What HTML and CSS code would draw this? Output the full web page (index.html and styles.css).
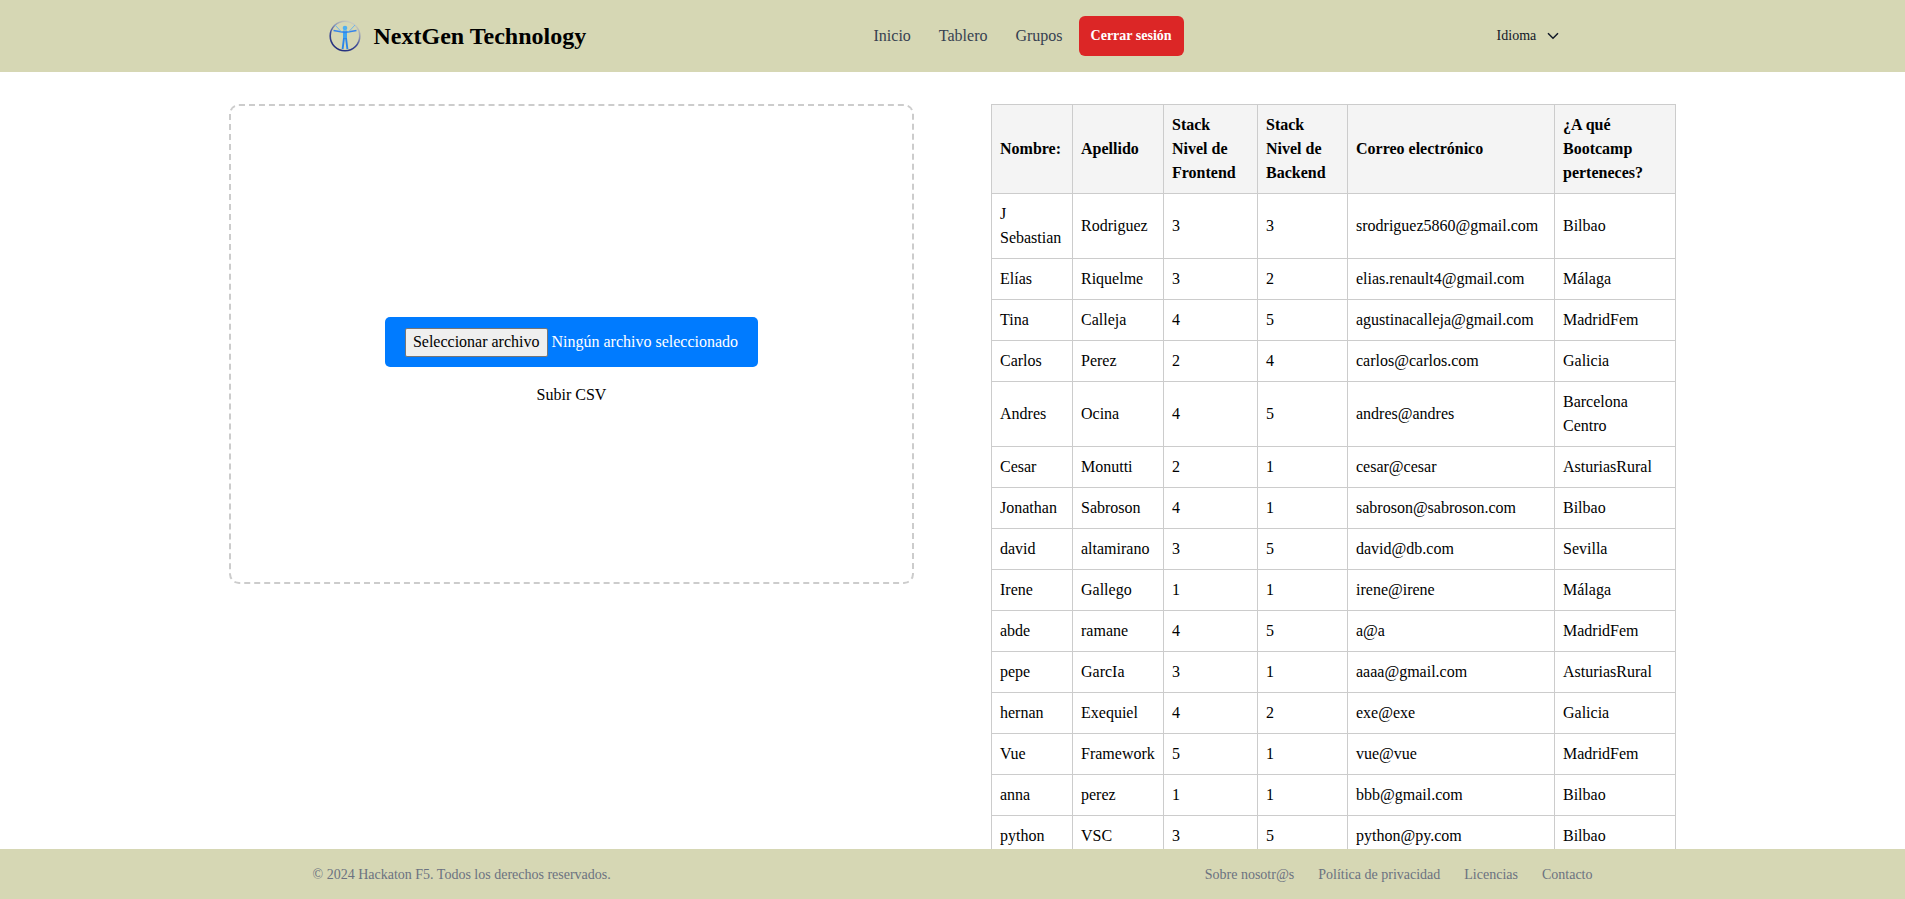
FILE: index.html
```html
<!DOCTYPE html>
<html lang="es">
<head>
    <meta charset="UTF-8">
    <meta name="viewport" content="width=device-width, initial-scale=1.0">
    <title>NextGen Technology</title>
    <link rel="stylesheet" href="styles.css">
</head>
<body>
    <header class="site-header">
        <div class="header-inner">
            <a class="brand" href="#">
                <svg class="brand-logo" width="32" height="32" viewBox="0 0 32 32" fill="none">
                    <defs>
                        <linearGradient id="ring" x1="0.75" y1="0" x2="0.25" y2="1">
                            <stop offset="0" stop-color="#d3d5c0"/>
                            <stop offset="0.3" stop-color="#9aa0b4"/>
                            <stop offset="0.6" stop-color="#3d4a96"/>
                            <stop offset="1" stop-color="#1f2a78"/>
                        </linearGradient>
                    </defs>
                    <circle cx="16" cy="16" r="14.8" stroke="url(#ring)" stroke-width="1.6"/>
                    <circle cx="16" cy="8" r="2.3" fill="#4fb0f0"/>
                    <path d="M16 10.5v8.5" stroke="#3fa4f0" stroke-width="4"/>
                    <path d="M15 18l-1.4 11M17 18l1.4 11" stroke="#2b86ea" stroke-width="1.9"/>
                    <path d="M4.5 10.5L16 12.5L27.5 10.5" stroke="#3584ea" stroke-width="1.4"/>
                    <path d="M6 5l7 7.5M26 5l-7 7.5" stroke="#6fb6ec" stroke-width="1"/>
                </svg>
                <span class="brand-name">NextGen Technology</span>
            </a>
            <nav class="main-nav">
                <a href="#">Inicio</a>
                <a href="#">Tablero</a>
                <a href="#">Grupos</a>
                <button class="logout" type="button">Cerrar sesión</button>
            </nav>
            <button class="lang" type="button">
                Idioma
                <svg width="12" height="8" viewBox="0 0 12 8" fill="none" stroke="#111827" stroke-width="1.5">
                    <path d="M1 1.2l5 5 5-5"/>
                </svg>
            </button>
        </div>
    </header>

    <main class="content">
        <section class="upload">
            <div class="file-field">
                <button class="file-button" type="button">Seleccionar archivo</button>
                <span>Ningún archivo seleccionado</span>
            </div>
            <button class="upload-button" type="button">Subir CSV</button>
        </section>

        <table class="people">
            <thead>
                <tr>
                    <th class="col-name">Nombre:</th>
                    <th class="col-surname">Apellido</th>
                    <th class="col-front">Stack Nivel de Frontend</th>
                    <th class="col-back">Stack Nivel de Backend</th>
                    <th class="col-mail">Correo electrónico</th>
                    <th class="col-camp">¿A qué Bootcamp perteneces?</th>
                </tr>
            </thead>
            <tbody>
                <tr><td>J Sebastian</td><td>Rodriguez</td><td>3</td><td>3</td><td>srodriguez5860@gmail.com</td><td>Bilbao</td></tr>
                <tr><td>Elías</td><td>Riquelme</td><td>3</td><td>2</td><td>elias.renault4@gmail.com</td><td>Málaga</td></tr>
                <tr><td>Tina</td><td>Calleja</td><td>4</td><td>5</td><td>agustinacalleja@gmail.com</td><td>MadridFem</td></tr>
                <tr><td>Carlos</td><td>Perez</td><td>2</td><td>4</td><td>carlos@carlos.com</td><td>Galicia</td></tr>
                <tr><td>Andres</td><td>Ocina</td><td>4</td><td>5</td><td>andres@andres</td><td>Barcelona Centro</td></tr>
                <tr><td>Cesar</td><td>Monutti</td><td>2</td><td>1</td><td>cesar@cesar</td><td>AsturiasRural</td></tr>
                <tr><td>Jonathan</td><td>Sabroson</td><td>4</td><td>1</td><td>sabroson@sabroson.com</td><td>Bilbao</td></tr>
                <tr><td>david</td><td>altamirano</td><td>3</td><td>5</td><td>david@db.com</td><td>Sevilla</td></tr>
                <tr><td>Irene</td><td>Gallego</td><td>1</td><td>1</td><td>irene@irene</td><td>Málaga</td></tr>
                <tr><td>abde</td><td>ramane</td><td>4</td><td>5</td><td>a@a</td><td>MadridFem</td></tr>
                <tr><td>pepe</td><td>GarcIa</td><td>3</td><td>1</td><td>aaaa@gmail.com</td><td>AsturiasRural</td></tr>
                <tr><td>hernan</td><td>Exequiel</td><td>4</td><td>2</td><td>exe@exe</td><td>Galicia</td></tr>
                <tr><td>Vue</td><td>Framework</td><td>5</td><td>1</td><td>vue@vue</td><td>MadridFem</td></tr>
                <tr><td>anna</td><td>perez</td><td>1</td><td>1</td><td>bbb@gmail.com</td><td>Bilbao</td></tr>
                <tr><td>python</td><td>VSC</td><td>3</td><td>5</td><td>python@py.com</td><td>Bilbao</td></tr>
            </tbody>
        </table>
    </main>

    <footer class="site-footer">
        <div class="footer-inner">
            <span>© 2024 Hackaton F5. Todos los derechos reservados.</span>
            <nav class="footer-nav">
                <a href="#">Sobre nosotr@s</a>
                <a href="#">Política de privacidad</a>
                <a href="#">Licencias</a>
                <a href="#">Contacto</a>
            </nav>
        </div>
    </footer>
</body>
</html>
```

FILE: styles.css
```css
:root {
    --band: #d6d7b4;
    --border: #cccccc;
    --nav-text: #374151;
    --footer-text: #6b7280;
    --blue: #007bff;
    --red: #dc2626;
    --font: "Liberation Serif", "Times New Roman", serif;
}

* {
    box-sizing: border-box;
    margin: 0;
    padding: 0;
}

body {
    height: 100vh;
    display: flex;
    flex-direction: column;
    overflow: hidden;
    background: #fff;
    color: #000;
    font-family: var(--font);
    font-size: 16px;
    line-height: 24px;
}

a {
    color: inherit;
    text-decoration: none;
}

button {
    font-family: var(--font);
}

.site-header {
    flex: none;
    height: 72px;
    background: var(--band);
}

.header-inner {
    max-width: 1280px;
    height: 100%;
    margin: 0 auto;
    padding: 0 16px;
    display: flex;
    align-items: center;
}

.brand {
    width: 533px;
    display: flex;
    align-items: center;
    gap: 13px;
}

.brand-name {
    font-size: 24px;
    font-weight: 700;
    line-height: 32px;
}

.main-nav {
    display: flex;
    align-items: center;
    gap: 4px;
}

.main-nav a {
    padding: 0 12px;
    color: var(--nav-text);
}

.logout {
    height: 40px;
    padding: 0 12px;
    border: none;
    border-radius: 6px;
    background: var(--red);
    color: #fff;
    font-size: 14px;
    font-weight: 700;
}

.lang {
    margin-left: 313px;
    display: flex;
    align-items: center;
    gap: 11px;
    border: none;
    background: transparent;
    color: #111827;
    font-size: 14px;
}

.content {
    flex: 1;
    min-height: 0;
    overflow: hidden;
    padding-top: 32px;
    display: flex;
    justify-content: center;
    align-items: flex-start;
    gap: 77px;
}

.upload {
    width: 685px;
    height: 480px;
    padding-top: 36px;
    display: flex;
    flex-direction: column;
    align-items: center;
    justify-content: center;
    gap: 16px;
    border: 2px dashed var(--border);
    border-radius: 10px;
}

.file-field {
    display: flex;
    align-items: center;
    gap: 4px;
    height: 50px;
    padding: 0 20px;
    border-radius: 5px;
    background: var(--blue);
    color: #fff;
}

.file-button {
    height: 29px;
    padding: 0 7px;
    border: 1px solid #767676;
    border-radius: 2px;
    background: #efefef;
    color: #000;
    font-size: 16px;
}

.upload-button {
    border: none;
    background: transparent;
    color: #000;
    font-size: 16px;
    line-height: 24px;
}

.people {
    width: 685px;
    flex: none;
    table-layout: fixed;
    border-collapse: collapse;
}

.people th,
.people td {
    padding: 8px;
    border: 1px solid var(--border);
    text-align: left;
}

.people th {
    background: #f4f4f4;
    font-weight: 700;
}

.col-name { width: 81px; }
.col-surname { width: 91px; }
.col-front { width: 94px; }
.col-back { width: 90px; }
.col-mail { width: 207px; }
.col-camp { width: 121px; }

.site-footer {
    flex: none;
    height: 50px;
    padding-top: 2px;
    background: var(--band);
    color: var(--footer-text);
    font-size: 14px;
}

.footer-inner {
    max-width: 1280px;
    height: 100%;
    margin: 0 auto;
    display: flex;
    align-items: center;
    justify-content: space-between;
}

.footer-nav {
    display: flex;
    gap: 24px;
}
```
